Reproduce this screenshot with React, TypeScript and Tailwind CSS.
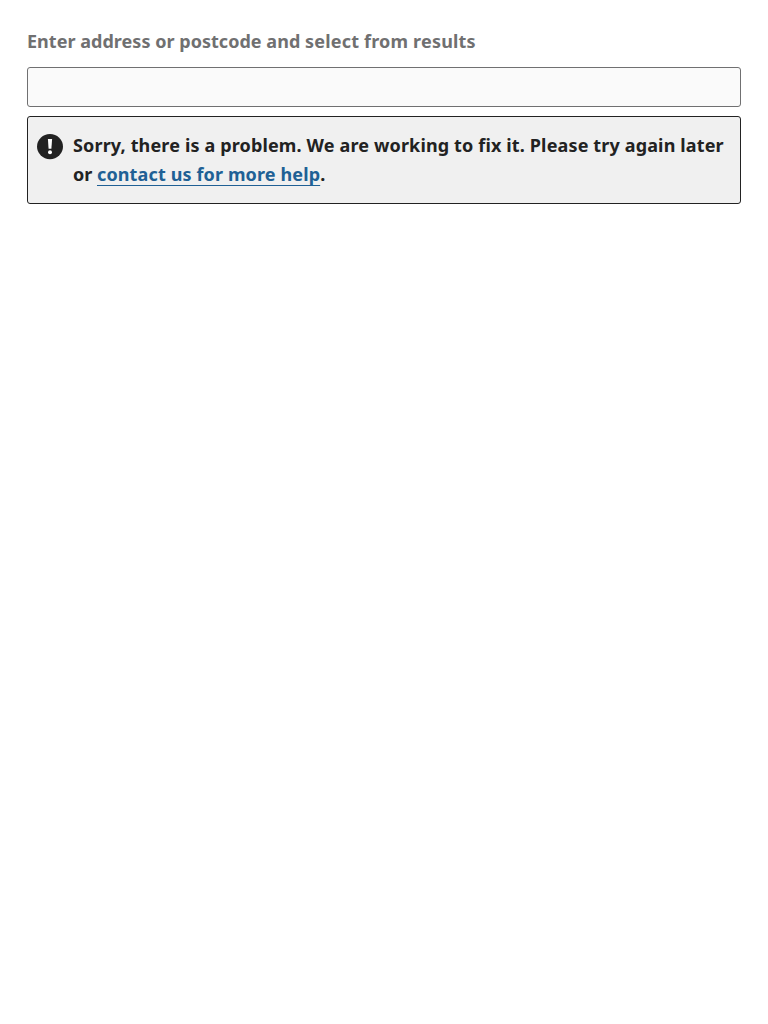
export default function App() {
  return (
    <main className="min-h-screen bg-white px-[27px] pt-[27px] font-['Noto_Sans',sans-serif] text-[18px] leading-[29px] font-bold text-[#222222]">
      <label htmlFor="address" className="block tracking-[0.03px] text-[#707071]">
        Enter address or postcode and <span className="tracking-[0.19px]">select from results</span>
      </label>
      <input
        id="address"
        className="mt-[11px] block h-10 w-full rounded-[3px] border border-[#707071] bg-[#fafafa] px-2 font-normal"
      />
      <div className="mt-[9px] flex h-[88px] rounded-[3px] border border-[#222222] bg-[#f0f0f0] pt-[14px] pr-2 pl-[9px]">
        <svg viewBox="0 0 26 26" className="mt-[3px] h-[26px] w-[26px] shrink-0" aria-hidden="true">
          <ellipse cx="13" cy="12.6" rx="13" ry="12.6" fill="#222222" />
          <path d="M10.9 5h4.2l-.7 9.8h-2.8z" fill="#ffffff" />
          <circle cx="13" cy="18.3" r="2" fill="#ffffff" />
        </svg>
        <p className="ml-[10px] tracking-[0.145px]">
          Sorry, there is a problem. We are working to fix it. Please try again later{" "}
          <span className="tracking-normal">or </span>
          <a href="#contact" className="tracking-[0.13px] text-[#206095] underline decoration-1 underline-offset-[4px]">
            contact us for more help
          </a>
          .
        </p>
      </div>
    </main>
  );
}
